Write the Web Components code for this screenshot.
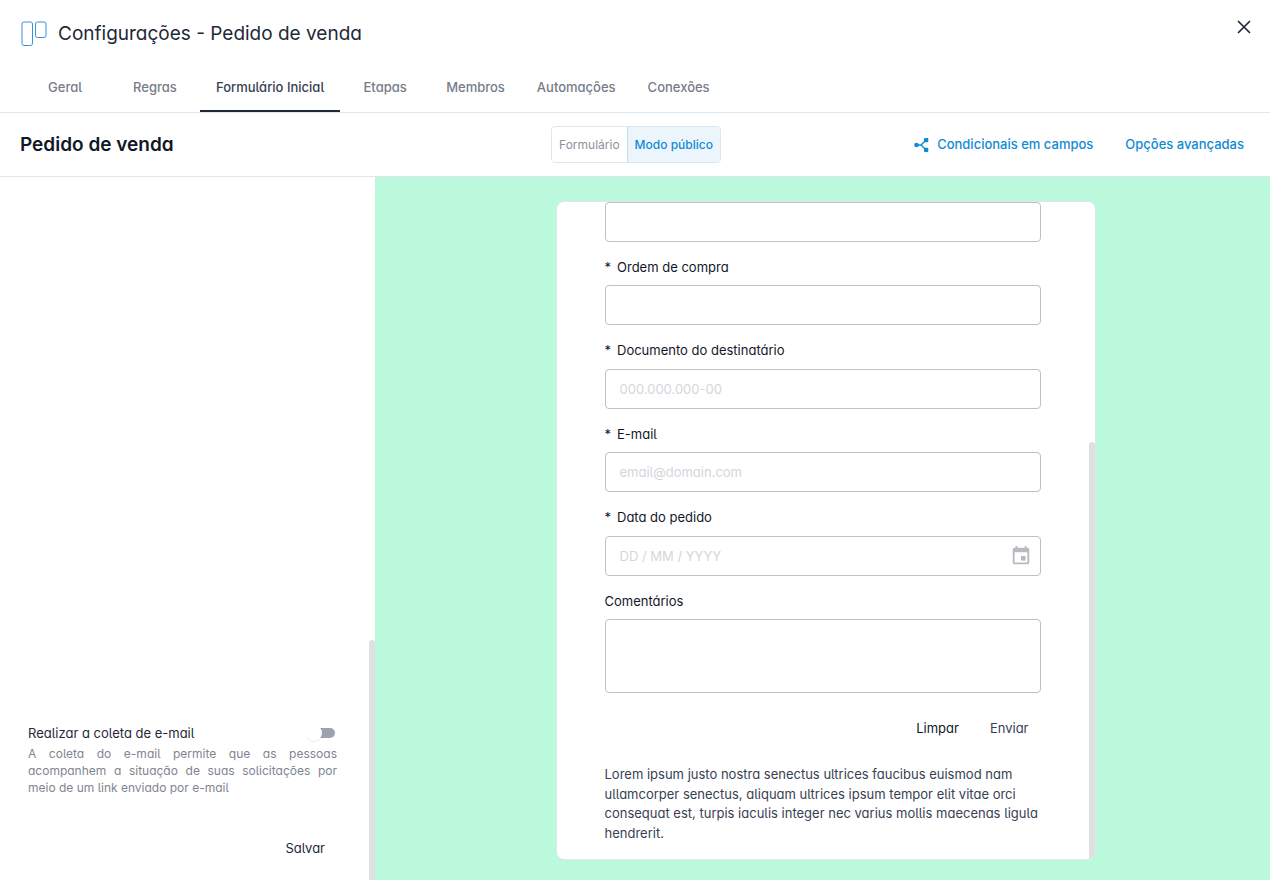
<!DOCTYPE html>
<html lang="pt-BR">
<head>
<meta charset="utf-8">
<meta name="viewport" content="width=device-width, initial-scale=1">
<title>Configurações - Pedido de venda</title>
<style>
  html, body { height: 100%; margin: 0; }
  body {
    background: #fff;
    color: #1f2937;
    font: 400 13px/1.5 Inter, "Liberation Sans", sans-serif;
    --blue: #0f8bd3;
    --line: #dfe6ee;
    --alt: "cv11" 1, "cv05" 1;
    font-feature-settings: var(--alt);
  }
</style>
</head>
<body>
<settings-page></settings-page>
<script>
const define = (name, html, init) => {
  const template = document.createElement('template');
  template.innerHTML = html;
  customElements.define(name, class extends HTMLElement {
    constructor() {
      super();
      this.attachShadow({ mode: 'open' }).append(template.content.cloneNode(true));
    }
    connectedCallback() { if (init) init(this, this.shadowRoot); }
  });
};

define('page-header', `
  <style>
    :host { display: flex; align-items: flex-start; justify-content: space-between; height: 64px; padding: 0 18px 0 20px; }
    .title { display: flex; align-items: center; gap: 10px; height: 68px; }
    h1 { margin: 0; font-size: 19px; font-weight: 400; line-height: 28px; color: #1f2937; }
    button { margin: 19px 0 0; padding: 0; border: 0; background: none; width: 16px; height: 16px; color: #1f2937; }
    svg { display: block; }
  </style>
  <div class="title">
    <svg width="28" height="28" viewBox="0 0 28 28" fill="none" stroke="#3d8fdd" aria-hidden="true">
      <rect x="2" y="2" width="10.5" height="23.5" rx="2"/><rect x="15.5" y="2" width="10.5" height="15.5" rx="2"/>
    </svg>
    <h1><slot></slot></h1>
  </div>
  <button type="button" aria-label="Fechar">
    <svg width="16" height="16" viewBox="0 0 16 16" stroke="currentColor" stroke-width="1.7" stroke-linecap="round"><path d="M2.500 2.500l11 11M13.500 2.500l-11 11"/></svg>
  </button>
`);

define('tab-link', `
  <style>
    :host { display: block; }
    a { display: flex; align-items: center; justify-content: center; box-sizing: border-box; height: 48px; min-width: 90px; padding: 2px 16px 0; border-bottom: 2px solid transparent; color: #767c87; font-weight: 500; text-decoration: none; }
    :host([active]) a { color: #374151; border-color: #1f2937; }
  </style>
  <a href="#"><slot></slot></a>
`);

define('tab-bar', `
  <style>
    :host { display: flex; padding: 0 20px; border-bottom: 1px solid var(--line); }
  </style>
  <slot></slot>
`);

define('form-toolbar', `
  <style>
    :host { display: grid; grid-template-columns: 1fr auto 1fr; align-items: center; height: 63px; padding: 0 18px 0 20px; border-bottom: 1px solid var(--line); }
    h2 { margin: 0; font-size: 19px; font-weight: 600; line-height: 28px; color: #111827; }
    .modes { display: flex; border: 1px solid var(--line); border-radius: 4px; overflow: hidden; font-feature-settings: normal; }
    button { font: inherit; font-size: 12px; height: 35px; padding: 0 7px; border: 0; background: #fff; color: #8b919b; }
    .on { background: #ecf5fc; color: var(--blue); font-weight: 500; border-left: 1px solid #c5dcec; }
    nav { display: flex; justify-content: flex-end; gap: 32px; padding-right: 8px; font-feature-settings: normal; }
    a { display: flex; align-items: center; gap: 8px; color: var(--blue); font-weight: 500; text-decoration: none; }
  </style>
  <h2><slot></slot></h2>
  <div class="modes"><button type="button">Formulário</button><button type="button" class="on" aria-pressed="true">Modo público</button></div>
  <nav>
    <a href="#"><svg width="16" height="16" viewBox="0 0 16 16" aria-hidden="true"><circle cx="3.500" cy="8" r="2.300" fill="currentColor"/><rect x="11" y="1" width="4.300" height="4.300" rx="1" fill="currentColor"/><rect x="11" y="10.700" width="4.300" height="4.300" rx="1" fill="currentColor"/><path d="M3 8h5M13 3L9 7q-1 1 0 2l4 4" fill="none" stroke="currentColor" stroke-width="1.400"/></svg>Condicionais em campos</a>
    <a href="#">Opções avançadas</a>
  </nav>
`);

define('toggle-switch', `
  <style>
    :host { display: block; }
    input { appearance: none; display: block; position: relative; margin: 0 2px 0 0; width: 24px; height: 10px; border-radius: 5px; background: #9ca3af; }
    input::before { content: ""; position: absolute; left: -5px; top: -3px; width: 16px; height: 16px; border-radius: 50%; background: #fff; box-shadow: 0 1px 1px rgba(0,0,0,.08); }
  </style>
  <input type="checkbox" role="switch">
`, (el, root) => root.querySelector('input').setAttribute('aria-label', el.getAttribute('label')));

define('side-panel', `
  <style>
    :host { display: flex; flex-direction: column; justify-content: flex-end; position: relative; box-sizing: border-box; padding: 0 38px 12px 28px; overflow: hidden; }
    .row { display: flex; align-items: center; justify-content: space-between; line-height: 20px; }
    p { margin: 2px 0 0; font-size: 12px; line-height: 17px; color: #7f8590; text-align: justify; }
    .actions { display: flex; justify-content: flex-end; margin-top: 32px; }
    button { font: inherit; font-feature-settings: inherit; color: #1f2937; height: 40px; padding: 2px 12px 0; border: 0; background: none; }
    .thumb { position: absolute; right: 0; bottom: 0; width: 6px; height: 240px; border-radius: 3px 3px 0 0; background: #dfe0e2; }
  </style>
  <div class="row"><span>Realizar a coleta de e-mail</span><toggle-switch label="Realizar a coleta de e-mail"></toggle-switch></div>
  <p>A coleta do e-mail permite que as pessoas acompanhem a situação de suas solicitações por meio de um link enviado por e-mail</p>
  <div class="actions"><button type="button">Salvar</button></div>
  <div class="thumb"></div>
`);

define('form-field', `
  <style>
    :host { display: block; }
    label { display: flex; gap: 6px; margin-bottom: 8px; color: #111827; }
    label:empty { display: none; }
    .box { display: flex; align-items: center; box-sizing: border-box; height: 40px; padding: 0 8px 0 14px; border: 1px solid #bfc0c3; border-radius: 4px; background: #fff; }
    :host([multiline]) .box { height: 74px; }
    input, textarea { flex: 1; min-width: 0; height: 100%; box-sizing: border-box; padding: 0; border: 0; outline: 0; resize: none; background: none; font: inherit; font-feature-settings: inherit; color: inherit; }
    ::placeholder { color: #d3d6db; opacity: 1; }
    svg { display: block; color: #b9babf; }
  </style>
  <label for="control"></label>
  <div class="box"></div>
`, (el, root) => {
  const label = root.querySelector('label');
  const add = text => label.append(Object.assign(document.createElement('span'), { textContent: text }));
  if (el.hasAttribute('required')) add('*');
  if (el.hasAttribute('label')) add(el.getAttribute('label'));
  const control = document.createElement(el.hasAttribute('multiline') ? 'textarea' : 'input');
  control.id = 'control';
  control.placeholder = el.getAttribute('placeholder') || '';
  const box = root.querySelector('.box');
  box.append(control);
  if (el.hasAttribute('calendar')) box.insertAdjacentHTML('beforeend',
    '<svg width="22" height="22" viewBox="0 0 24 24" fill="currentColor" aria-hidden="true"><path d="M19 3h-1V1h-2v2H8V1H6v2H5a2 2 0 0 0-2 2v14c0 1.100.9 2 2 2h14a2 2 0 0 0 2-2V5a2 2 0 0 0-2-2zm0 16H5V8h14v11z"/><path d="M12 12h5v5h-5z"/></svg>');
});

define('public-form', `
  <style>
    :host { display: flex; flex-direction: column; justify-content: flex-end; position: relative; box-sizing: border-box; width: 100%; max-width: 540px; padding: 0 54px 16px 48px; border: 1px solid #dfe6ee; border-radius: 8px; background: #fff; overflow: hidden; }
    form { display: flex; flex-direction: column; gap: 16px; }
    .actions { display: flex; justify-content: flex-end; gap: 6px; }
    button { font: inherit; font-feature-settings: inherit; color: #111827; height: 40px; padding: 0 12px 0 13px; border: 0; background: none; }
    .send { color: #374151; }
    p { margin: 0; color: #374151; }
    .thumb { position: absolute; right: 0; bottom: 0; width: 6px; height: 417px; border-radius: 3px 3px 0 0; background: #dfe0e2; }
  </style>
  <form>
    <slot></slot>
    <div class="actions"><button type="reset">Limpar</button><button type="button" class="send">Enviar</button></div>
    <p><slot name="footer"></slot></p>
  </form>
  <div class="thumb"></div>
`);

define('settings-page', `
  <style>
    :host { display: flex; flex-direction: column; height: 100vh; overflow: hidden; }
    main { flex: 1; min-height: 0; display: grid; grid-template-columns: 375px 1fr; grid-template-rows: minmax(0, 1fr); }
    .preview { display: flex; justify-content: center; padding: 24px 0 20px 6px; background: #bbf9dd; min-height: 0; }
  </style>
  <page-header>Configurações - Pedido de venda</page-header>
  <tab-bar>
    <tab-link>Geral</tab-link><tab-link>Regras</tab-link><tab-link active>Formulário Inicial</tab-link><tab-link>Etapas</tab-link><tab-link>Membros</tab-link><tab-link>Automações</tab-link><tab-link>Conexões</tab-link>
  </tab-bar>
  <form-toolbar>Pedido de venda</form-toolbar>
  <main>
    <side-panel></side-panel>
    <div class="preview">
      <public-form>
        <form-field></form-field>
        <form-field label="Ordem de compra" required></form-field>
        <form-field label="Documento do destinatário" required placeholder="000.000.000-00"></form-field>
        <form-field label="E-mail" required placeholder="email@domain.com"></form-field>
        <form-field label="Data do pedido" required placeholder="DD / MM / YYYY" calendar></form-field>
        <form-field label="Comentários" multiline></form-field>
        <span slot="footer">Lorem ipsum justo nostra senectus ultrices faucibus euismod nam ullamcorper senectus, aliquam ultrices ipsum tempor elit vitae orci consequat est, turpis iaculis integer nec varius mollis maecenas ligula hendrerit.</span>
      </public-form>
    </div>
  </main>
`);
</script>
</body>
</html>
